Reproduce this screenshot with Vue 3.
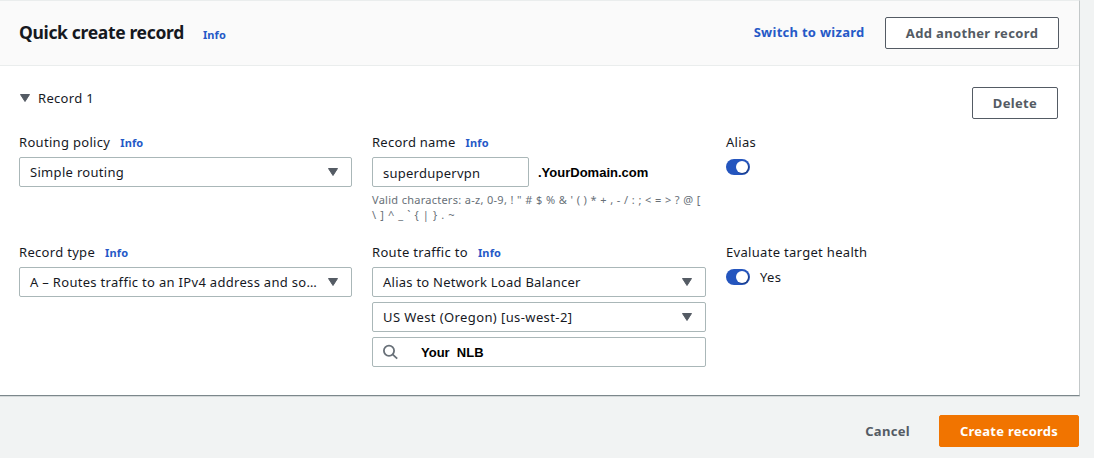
<script setup>
import { ref } from 'vue'

const alias = ref(true)
const evaluateHealth = ref(true)
const recordName = ref('superdupervpn')
</script>

<template>
  <main class="page">
    <section class="panel">
      <header class="panel-header">
        <h2 class="title">Quick create record</h2>
        <a class="info title-info">Info</a>
        <a class="wizard">Switch to wizard</a>
        <button class="btn add">Add another record</button>
      </header>

      <div class="panel-body">
        <div class="record-bar">
          <div class="record-toggle">
            <svg class="caret" width="10" height="8" viewBox="0 0 10 8"><path d="M0.5 0.5h9L5 7.5z" /></svg>
            <span>Record 1</span>
          </div>
          <button class="btn delete">Delete</button>
        </div>

        <div class="grid">
          <div class="field">
            <div class="label"><span>Routing policy</span><a class="info">Info</a></div>
            <div class="control">
              <span>Simple routing</span>
              <svg class="caret" width="10" height="8" viewBox="0 0 10 8"><path d="M0.5 0.5h9L5 7.5z" /></svg>
            </div>
          </div>

          <div class="field">
            <div class="label"><span class="tight">Record name</span><a class="info">Info</a></div>
            <div class="name-row">
              <input v-model="recordName" class="control name-input" />
              <span class="domain">.YourDomain.com</span>
            </div>
            <div class="hint">
              <div>Valid characters: a-z, 0-9, ! " # $ % &amp; ' ( ) * + , - / : ; &lt; = &gt; ? @ [</div>
              <div class="hint-rest">\ ] ^ _ ` { | } . ~</div>
            </div>
          </div>

          <div class="field">
            <div class="label"><span>Alias</span></div>
            <div class="switch-row" @click="alias = !alias">
              <span class="switch" :class="{ on: alias }"></span>
            </div>
          </div>

          <div class="field">
            <div class="label"><span>Record type</span><a class="info">Info</a></div>
            <div class="control">
              <span>A – Routes traffic to an IPv4 address and so…</span>
              <svg class="caret" width="10" height="8" viewBox="0 0 10 8"><path d="M0.5 0.5h9L5 7.5z" /></svg>
            </div>
          </div>

          <div class="field">
            <div class="label"><span>Route traffic to</span><a class="info">Info</a></div>
            <div class="stack">
              <div class="control">
                <span class="tight">Alias to Network Load Balancer</span>
                <svg class="caret" width="10" height="8" viewBox="0 0 10 8"><path d="M0.5 0.5h9L5 7.5z" /></svg>
              </div>
              <div class="control">
                <span class="region">US West (Oregon) [us-west-2]</span>
                <svg class="caret" width="10" height="8" viewBox="0 0 10 8"><path d="M0.5 0.5h9L5 7.5z" /></svg>
              </div>
              <div class="control search">
                <svg width="16" height="16" viewBox="0 0 16 16" fill="none" stroke="#687078" stroke-width="1.8">
                  <circle cx="6" cy="6.8" r="5.1" /><path d="M9.6 10.4l4.6 4.2" />
                </svg>
                <span class="nlb">Your&nbsp; NLB</span>
              </div>
            </div>
          </div>

          <div class="field">
            <div class="label"><span>Evaluate target health</span></div>
            <div class="switch-row" @click="evaluateHealth = !evaluateHealth">
              <span class="switch" :class="{ on: evaluateHealth }"></span>
              <span>{{ evaluateHealth ? 'Yes' : 'No' }}</span>
            </div>
          </div>
        </div>
      </div>
    </section>

    <footer class="actions">
      <a class="cancel">Cancel</a>
      <button class="btn primary">Create records</button>
    </footer>
  </main>
</template>

<style>
body {
  background: #f1f3f3;
  overflow: hidden;
}
</style>

<style scoped>
* {
  box-sizing: border-box;
}
.page {
  width: 1094px;
  height: 458px;
  font: 13px/20px "Noto Sans", "Open Sans", sans-serif;
  letter-spacing: 0.31px;
  color: #16191f;
  white-space: nowrap;
}
.panel {
  width: 1080px;
  height: 396px;
  background: #fff;
  border-top: 1px solid #eaeded;
  border-right: 1px solid #c3c8c9;
  border-bottom: 1px solid #7c878b;
  box-shadow: 0 1px 0 #d5d9da;
}
.panel-header {
  display: flex;
  height: 65px;
  padding: 16px 20px 0 19px;
  background: #fafafa;
  border-bottom: 1px solid #eaeded;
}
.title {
  margin: 3px 19px 0 0;
  font-size: 17.5px;
  line-height: 24px;
  font-weight: 700;
  letter-spacing: -0.34px;
}
.info {
  margin: 1px 0 0 10px;
  font-size: 11px;
  font-weight: 700;
  letter-spacing: 0.15px;
  color: #2559c7;
}
.title-info {
  margin: 8px 0 0;
}
.wizard {
  margin: 5px 20.5px 0 auto;
  font-weight: 700;
  letter-spacing: 0.27px;
  color: #2559c7;
}
.tight {
  letter-spacing: 0.25px;
}
.region {
  letter-spacing: 0.4px;
}
.btn {
  display: flex;
  align-items: center;
  justify-content: center;
  height: 32px;
  padding: 0;
  border: 1px solid #545b64;
  border-radius: 2px;
  background: #fff;
  color: #545b64;
  font: 700 13px/20px "Noto Sans", "Open Sans", sans-serif;
  letter-spacing: 0.35px;
}
.add {
  width: 174px;
}
.panel-body {
  padding: 21px 20px 0 19px;
}
.record-bar {
  display: flex;
  justify-content: space-between;
  height: 45px;
}
.record-toggle {
  display: flex;
  align-items: center;
  gap: 8px;
  height: 21px;
}
.caret {
  flex: none;
  margin-left: 1px;
  fill: #545b64;
  stroke: #545b64;
  stroke-linejoin: round;
}
.delete {
  width: 86px;
  margin-right: 1px;
}
.grid {
  display: grid;
  grid-template-columns: 333px 334px 333px;
  grid-template-rows: 110px 125px;
  column-gap: 20px;
}
.label {
  display: flex;
  height: 25px;
}
.control {
  display: flex;
  align-items: center;
  justify-content: space-between;
  width: 100%;
  height: 30px;
  padding: 0 13px 0 10px;
  border: 1px solid #aab7b8;
  border-radius: 2px;
  background: #fff;
}
.stack {
  display: grid;
  gap: 5px;
}
.name-row {
  display: flex;
  align-items: center;
}
.name-input {
  width: 157px;
  padding: 2px 10px 0;
  color: #16191f;
  font: 13px/20px "Noto Sans", "Open Sans", sans-serif;
  letter-spacing: 0.25px;
}
.domain,
.nlb {
  padding-top: 2px;
  color: #000;
  font: 700 13px/20px "Liberation Sans", Arial, sans-serif;
  letter-spacing: 0;
}
.domain {
  margin-left: 9px;
}
.search {
  justify-content: flex-start;
}
.nlb {
  margin-left: 22px;
}
.hint {
  margin-top: 5px;
  font-size: 11px;
  line-height: 15px;
  letter-spacing: 0.25px;
  word-spacing: 0.3px;
  color: #687078;
}
.hint-rest {
  word-spacing: 0.75px;
}
.switch-row {
  display: flex;
  align-items: center;
  height: 20px;
  gap: 10px;
}
.switch {
  display: flex;
  align-items: center;
  width: 24px;
  height: 16px;
  padding: 0 2px;
  border-radius: 8px;
  background: #879596;
}
.switch::after {
  content: "";
  width: 12px;
  height: 12px;
  border-radius: 50%;
  background: #fff;
  box-shadow: 1px 1px 1px rgba(0, 0, 0, 0.3);
}
.switch.on {
  justify-content: flex-end;
  background: #2455be;
}
.actions {
  display: flex;
  justify-content: flex-end;
  align-items: center;
  height: 32px;
  margin-top: 19px;
  padding-right: 15px;
}
.cancel {
  margin-right: 29px;
  font-weight: 700;
  color: #545b64;
}
.primary {
  width: 140px;
  border-color: #f17400;
  background: #f17400;
  color: #fff;
  letter-spacing: 0.25px;
}
</style>
